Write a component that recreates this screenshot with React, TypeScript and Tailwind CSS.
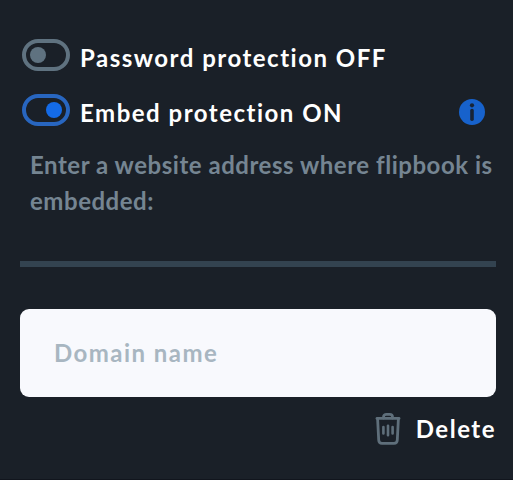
import React from 'react';

interface ToggleRowProps {
  label: string;
  checked: boolean;
  children?: React.ReactNode;
}

const ToggleRow: React.FC<ToggleRowProps> = ({ label, checked, children }) => (
  <div className="flex items-center h-8">
    <button
      type="button"
      role="switch"
      aria-checked={checked}
      aria-label={label}
      className={`flex items-center w-12 h-8 shrink-0 rounded-full border-4 px-1 ${
        checked ? 'justify-end border-[#2866c0]' : 'justify-start border-[#5f7280]'
      }`}
    >
      <span
        className={`block w-4 h-4 rounded-full ${checked ? 'bg-[#146be8]' : 'bg-[#5f7280]'}`}
      />
    </button>
    <span className="ml-[10px] mt-[5px] grow text-[24px] leading-8 tracking-[1.5px] whitespace-nowrap text-white">
      {label}
    </span>
    {children}
  </div>
);

const InfoIcon = () => (
  <svg width="26" height="26" viewBox="0 0 26 26" className="mt-[4px] mr-[11px] shrink-0">
    <circle cx="13" cy="13" r="13" fill="#1762cc" />
    <circle cx="13" cy="6.3" r="2.1" fill="#182436" />
    <rect x="11.2" y="9.8" width="3.6" height="12.2" rx="1.7" fill="#182436" />
  </svg>
);

const TrashIcon = () => (
  <svg
    width="26"
    height="34"
    viewBox="0 0 26 34"
    fill="none"
    stroke="#5f6f7b"
    strokeWidth="2.8"
    strokeLinecap="round"
    strokeLinejoin="round"
  >
    <path d="M2 6.4H24" />
    <path d="M8.5 6V5.2C8.5 3.4 9.8 2.4 11.4 2.4H14.6C16.2 2.4 17.5 3.4 17.5 5.2V6" />
    <path d="M2.6 6.8L3.7 28C3.8 30.4 5 31.4 7 31.4H19C21 31.4 22.2 30.4 22.3 28L23.4 6.8" />
    <path d="M8.4 15V21.5M13 13.8V23.2M17.6 15V21.5" strokeWidth="2.6" />
  </svg>
);

const App = () => (
  <div className="flex flex-col h-[480px] w-[513px] overflow-hidden bg-[#1a2028] border-b border-[#11151d] pt-[39px] pl-5 pr-[17px] font-['Lato',sans-serif] font-bold">
    <div className="flex flex-col gap-[23px] pl-[2px]">
      <ToggleRow label="Password protection OFF" checked={false} />
      <ToggleRow label="Embed protection ON" checked>
        <InfoIcon />
      </ToggleRow>
    </div>

    <p className="mt-[21px] ml-[10px] text-[24px] leading-9 tracking-[0.53px] whitespace-nowrap text-[#758592]">
      Enter a website address where flipbook is
      <br />
      embedded:
    </p>

    <hr className="mt-[42px] h-[6px] shrink-0 border-0 bg-[#334350]" />

    <input
      type="text"
      placeholder="Domain name"
      className="mt-[42px] h-[88px] w-full shrink-0 rounded-[9px] bg-[#f8f9fd] px-[34px] pb-[1px] text-[24px] tracking-[1.45px] text-[#1a2028] placeholder:text-[#a8b6c1]"
    />

    <button type="button" className="mt-[15px] flex items-center self-end text-[24px] text-white">
      <TrashIcon />
      <span className="ml-[15px] leading-8 tracking-[1.5px]">Delete</span>
    </button>
  </div>
);

export default App;
